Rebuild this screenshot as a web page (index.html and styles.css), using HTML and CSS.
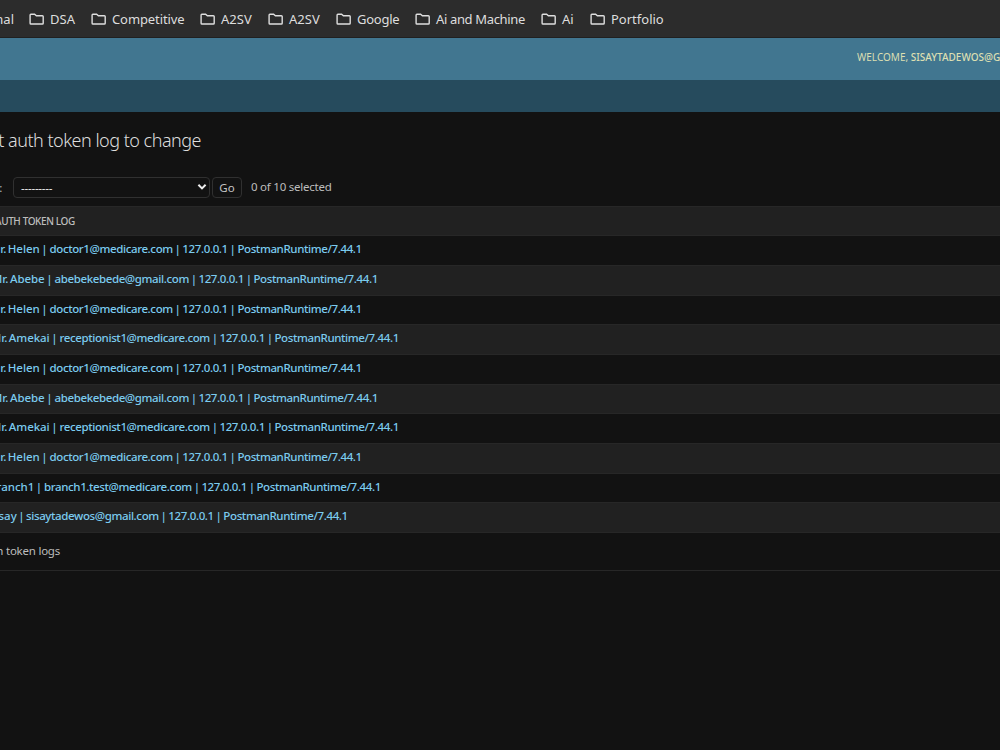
FILE: index.html
```
<!DOCTYPE html>
<html lang="en">
<head>
  <meta charset="UTF-8">
  <title>Select auth token log to change</title>
  <link rel="stylesheet" href="styles.css">
</head>
<body>
<svg width="0" height="0" class="defs">
  <symbol id="folder" viewBox="0 0 16 14">
    <path d="M1.9 2.2h3.7l1.8 1.6h6a.8.8 0 0 1 .8.8v6.6a.8.8 0 0 1-.8.8H1.9a.8.8 0 0 1-.8-.8V3a.8.8 0 0 1 .8-.8z" fill="none" stroke="currentColor" stroke-width="1.4"/>
  </symbol>
</svg>
<nav class="bookmarks">
  <span class="bookmark personal"><span>Personal</span></span>
  <span class="bookmark dsa"><svg><use href="#folder"/></svg><span>DSA</span></span>
  <span class="bookmark competitive"><svg><use href="#folder"/></svg><span>Competitive</span></span>
  <span class="bookmark a2sv"><svg><use href="#folder"/></svg><span>A2SV</span></span>
  <span class="bookmark a2sv"><svg><use href="#folder"/></svg><span>A2SV</span></span>
  <span class="bookmark google"><svg><use href="#folder"/></svg><span>Google</span></span>
  <span class="bookmark machine"><svg><use href="#folder"/></svg><span>Ai and Machine</span></span>
  <span class="bookmark ai"><svg><use href="#folder"/></svg><span>Ai</span></span>
  <span class="bookmark portfolio"><svg><use href="#folder"/></svg><span>Portfolio</span></span>
</nav>
<header class="header">
  <div class="user-tools">Welcome, <strong>sisaytadewos@gmail.com</strong></div>
</header>
<div class="breadcrumbs"></div>
<main class="content">
  <h1>Select auth token log to change</h1>
  <div class="actions">
    <label>Action:</label>
    <div class="select"><span>---------</span><svg width="10" height="8" viewBox="0 0 10 8"><path d="M1.4 1.8L5 5.4l3.6-3.6" fill="none" stroke="#eee" stroke-width="2"/></svg></div>
    <button class="go">Go</button>
    <span class="counter">0 of 10 selected</span>
  </div>
  <div class="results">
    <div class="head">Auth token log</div>
    <a class="row"><span class="helen">Dr. Helen |</span><span>doctor1@medicare.com | 127.0.0.1 | PostmanRuntime/7.44.1</span></a>
    <a class="row"><span class="abebe">Mr. Abebe |</span><span>abebekebede@gmail.com | 127.0.0.1 | PostmanRuntime/7.44.1</span></a>
    <a class="row"><span class="helen">Dr. Helen |</span><span>doctor1@medicare.com | 127.0.0.1 | PostmanRuntime/7.44.1</span></a>
    <a class="row"><span class="amekai">Mr. Amekai |</span><span>receptionist1@medicare.com | 127.0.0.1 | PostmanRuntime/7.44.1</span></a>
    <a class="row"><span class="helen">Dr. Helen |</span><span>doctor1@medicare.com | 127.0.0.1 | PostmanRuntime/7.44.1</span></a>
    <a class="row"><span class="abebe">Mr. Abebe |</span><span>abebekebede@gmail.com | 127.0.0.1 | PostmanRuntime/7.44.1</span></a>
    <a class="row"><span class="amekai">Mr. Amekai |</span><span>receptionist1@medicare.com | 127.0.0.1 | PostmanRuntime/7.44.1</span></a>
    <a class="row"><span class="helen">Dr. Helen |</span><span>doctor1@medicare.com | 127.0.0.1 | PostmanRuntime/7.44.1</span></a>
    <a class="row"><span class="branch">Branch1 |</span><span>branch1.test@medicare.com | 127.0.0.1 | PostmanRuntime/7.44.1</span></a>
    <a class="row"><span class="sisay">Sisay |</span><span>sisaytadewos@gmail.com | 127.0.0.1 | PostmanRuntime/7.44.1</span></a>
  </div>
  <div class="paginator"><span>10 auth token logs</span></div>
</main>
</body>
</html>
```
FILE: styles.css
```
* {
  box-sizing: border-box;
}
body {
  margin: 0;
  height: 750px;
  overflow: hidden;
  background: #121212;
  color: #bdbdbd;
  font-family: "Noto Sans", "Open Sans", sans-serif;
  font-size: 11.5px;
  letter-spacing: -0.23px;
  white-space: nowrap;
}
.defs {
  display: none;
}
.bookmarks {
  display: flex;
  height: 38px;
  background: #2c2c2c;
  border-bottom: 1px solid #202020;
  color: #dedede;
  font-size: 13px;
  letter-spacing: 0;
}
.bookmark {
  display: flex;
  flex: none;
  align-items: center;
  gap: 5px;
}
.bookmark svg {
  width: 16px;
  height: 14px;
  flex: none;
}
.personal {
  width: 29px;
  padding-right: 15px;
  justify-content: flex-end;
}
.dsa { width: 62px; }
.competitive { width: 109px; letter-spacing: -0.1px; }
.a2sv { width: 68px; }
.google { width: 79px; letter-spacing: -0.25px; }
.machine { width: 126px; letter-spacing: -0.35px; }
.ai { width: 49px; }
.header {
  display: flex;
  align-items: center;
  height: 42px;
  padding-left: 857px;
  background: #417690;
}
.user-tools {
  color: #dcdfb2;
  font-size: 10px;
  letter-spacing: 0;
  text-transform: uppercase;
  line-height: 14px;
  margin-bottom: 4px;
}
.user-tools strong {
  font-weight: 500;
}
.breadcrumbs {
  height: 32px;
  background: #264b5d;
}
h1 {
  display: flex;
  justify-content: flex-end;
  width: 201px;
  height: 24px;
  margin: 16px 0 24px;
  color: #dedede;
  font-size: 18px;
  font-weight: 300;
  line-height: 24px;
  letter-spacing: -0.5px;
}
.actions {
  display: flex;
  align-items: center;
  height: 22px;
}
.actions label {
  display: flex;
  justify-content: flex-end;
  width: 2px;
  margin-right: 11px;
}
.counter {
  margin-bottom: 2px;
}
.select {
  display: flex;
  align-items: center;
  justify-content: space-between;
  width: 197px;
  height: 21px;
  padding: 0 2px 0 7px;
  border: 1px solid #303030;
  border-radius: 4px;
  color: #eee;
}
.go {
  width: 30px;
  height: 21px;
  margin: 0 9px 0 2px;
  padding: 0;
  background: #121212;
  border: 1px solid #303030;
  border-radius: 4px;
  color: #c4c4c4;
  font: inherit;
}
.results {
  margin-top: 8px;
}
.head {
  height: 29.4px;
  background: #212121;
  border-top: 1px solid #272727;
  font-size: 10px;
  font-weight: 500;
  line-height: 28px;
  letter-spacing: -0.4px;
  text-indent: -5px;
  text-transform: uppercase;
}
.row {
  display: flex;
  height: 29.65px;
  border-top: 1px solid #272727;
  color: #7bcbef;
  font-weight: 500;
  line-height: 25.4px;
  letter-spacing: -0.38px;
  word-spacing: -0.8px;
}
.row:nth-child(odd) {
  background: #212121;
}
.row span:first-child {
  display: flex;
  justify-content: flex-end;
  letter-spacing: -0.05px;
  word-spacing: -1.4px;
}
.helen { width: 47.5px; margin-right: 2px; }
.abebe { width: 52.5px; margin-right: 2px; }
.amekai { width: 57.5px; margin-right: 2px; }
.branch { width: 42px; margin-right: 2px; }
.sisay { width: 24.5px; margin-right: 1.5px; }
.paginator {
  height: 39px;
  border-top: 1px solid #272727;
  border-bottom: 1px solid #272727;
  line-height: 36px;
}
.paginator span {
  display: flex;
  justify-content: flex-end;
  width: 60px;
}
```
